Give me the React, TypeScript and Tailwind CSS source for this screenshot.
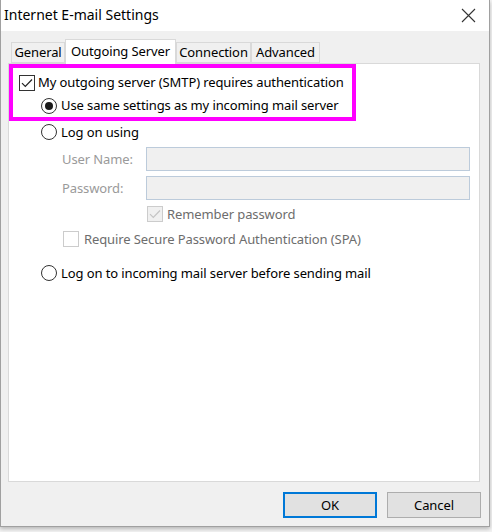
import React from "react";

const tabs = [
	{ title: "General", width: "w-[54px]", active: false },
	{ title: "Outgoing Server", width: "w-[111px]", active: true },
	{ title: "Connection", width: "w-[75px]", active: false },
	{ title: "Advanced", width: "w-[69px]", active: false },
];

const CheckBox = ({ checked, disabled }: { checked: boolean; disabled?: boolean }) => (
	<span
		className={
			disabled
				? checked
					? "flex h-[16px] w-[16px] shrink-0 items-center justify-center border border-[#cccccc] bg-[#f0f0f0]"
					: "flex h-[16px] w-[16px] shrink-0 items-center justify-center border border-[#cccccc] bg-white"
				: "flex h-[16px] w-[16px] shrink-0 items-center justify-center border border-[#333333] bg-white"
		}
	>
		{checked && (
			<svg width="12" height="10" viewBox="0 0 12 10">
				<path
					d="M1 5.2 L4.3 8.5 L11 1.5"
					fill="none"
					stroke={disabled ? "#c4c4c4" : "#222222"}
					strokeWidth="1.2"
				/>
			</svg>
		)}
	</span>
);

const Radio = ({ checked }: { checked: boolean }) => (
	<span className="flex h-[16px] w-[16px] shrink-0 items-center justify-center rounded-full border border-[#333333] bg-white">
		{checked && <span className="h-[8px] w-[8px] rounded-full bg-[#1a1a1a]" />}
	</span>
);

export default function App() {
	return (
		<div
			className="h-[532px] w-[492px] overflow-hidden bg-[#f4f4f4] text-[13px] leading-none tracking-[-0.1px] text-black"
			style={{ fontFamily: '"Noto Sans", "Open Sans", sans-serif' }}
		>
			<div className="flex h-[527px] w-[490px] flex-col border-x border-b border-[#a0a0a0] shadow-[0_2px_4px_rgba(0,0,0,0.25)]">
				{/* title bar */}
				<div className="flex h-[31px] shrink-0 items-center justify-between bg-white pl-[3px] pr-[13px]">
					<span className="pb-[1px] text-[14px] tracking-normal">Internet E-mail Settings</span>
					<svg width="15" height="15" viewBox="0 0 15 15">
						<path d="M1 1 L14 14 M14 1 L1 14" stroke="#333333" strokeWidth="1.1" />
					</svg>
				</div>

				{/* body */}
				<div className="flex flex-1 flex-col bg-[#f0f0f0] px-[7px] pt-[7px]">
					<div className="flex h-[25px] items-end pl-[3px]">
						{tabs.map((tab, index) => (
							<div
								key={index}
								className={
									tab.active
										? `relative z-10 -mb-px flex h-[25px] items-center justify-center border border-b-0 border-[#d9d9d9] bg-white pb-[2px] ${tab.width}`
										: `flex h-[21px] items-center justify-center border border-[#d9d9d9] bg-[#f0f0f0] ${tab.width}`
								}
							>
								{tab.title}
							</div>
						))}
					</div>

					<div className="flex h-[419px] w-[472px] flex-col border border-[#d9d9d9] bg-white">
						{/* highlighted group */}
						<div className="flex h-[57px] w-[347px] flex-col border-[4px] border-[#ff00ff] pt-[3px]">
							<div className="flex h-[24px] items-center gap-[3px] pl-[6px]">
								<CheckBox checked />
								<span>My outgoing server (SMTP) requires authentication</span>
							</div>
							<div className="flex h-[24px] items-center gap-[4px] pl-[28px]">
								<Radio checked />
								<span>Use same settings as my incoming mail server</span>
							</div>
						</div>

						<div className="flex h-[22px] items-center gap-[4px] pl-[32px]">
							<Radio checked={false} />
							<span>Log on using</span>
						</div>

						<div className="mt-[4px] flex h-[24px] items-center pl-[53px] pr-[9px]">
							<span className="w-[84px] text-[#9a9a9a]">User Name:</span>
							<div className="h-[24px] flex-1 border border-[#bccbdb] bg-[#f0f0f0]" />
						</div>
						<div className="mt-[5px] flex h-[24px] items-center pl-[53px] pr-[9px]">
							<span className="w-[84px] text-[#9a9a9a]">Password:</span>
							<div className="h-[24px] flex-1 border border-[#bccbdb] bg-[#f0f0f0]" />
						</div>

						<div className="mt-[3px] flex h-[22px] items-center gap-[4px] pl-[138px] text-[#6d6d6d]">
							<CheckBox checked disabled />
							<span>Remember password</span>
						</div>
						<div className="mt-[3px] flex h-[22px] items-center gap-[5px] pl-[54px] text-[#6d6d6d]">
							<CheckBox checked={false} disabled />
							<span>Require Secure Password Authentication (SPA)</span>
						</div>

						<div className="mt-[12px] flex h-[22px] items-center gap-[4px] pl-[32px]">
							<Radio checked={false} />
							<span>Log on to incoming mail server before sending mail</span>
						</div>
					</div>

					<div className="flex justify-end gap-[10px] pr-[1px] pt-[10px]">
						<button className="flex h-[26px] w-[94px] items-center justify-center border-2 border-[#0078d7] bg-[#e1e1e1]">
							OK
						</button>
						<button className="flex h-[26px] w-[94px] items-center justify-center border border-[#adadad] bg-[#e1e1e1]">
							Cancel
						</button>
					</div>
				</div>
			</div>
		</div>
	);
}
